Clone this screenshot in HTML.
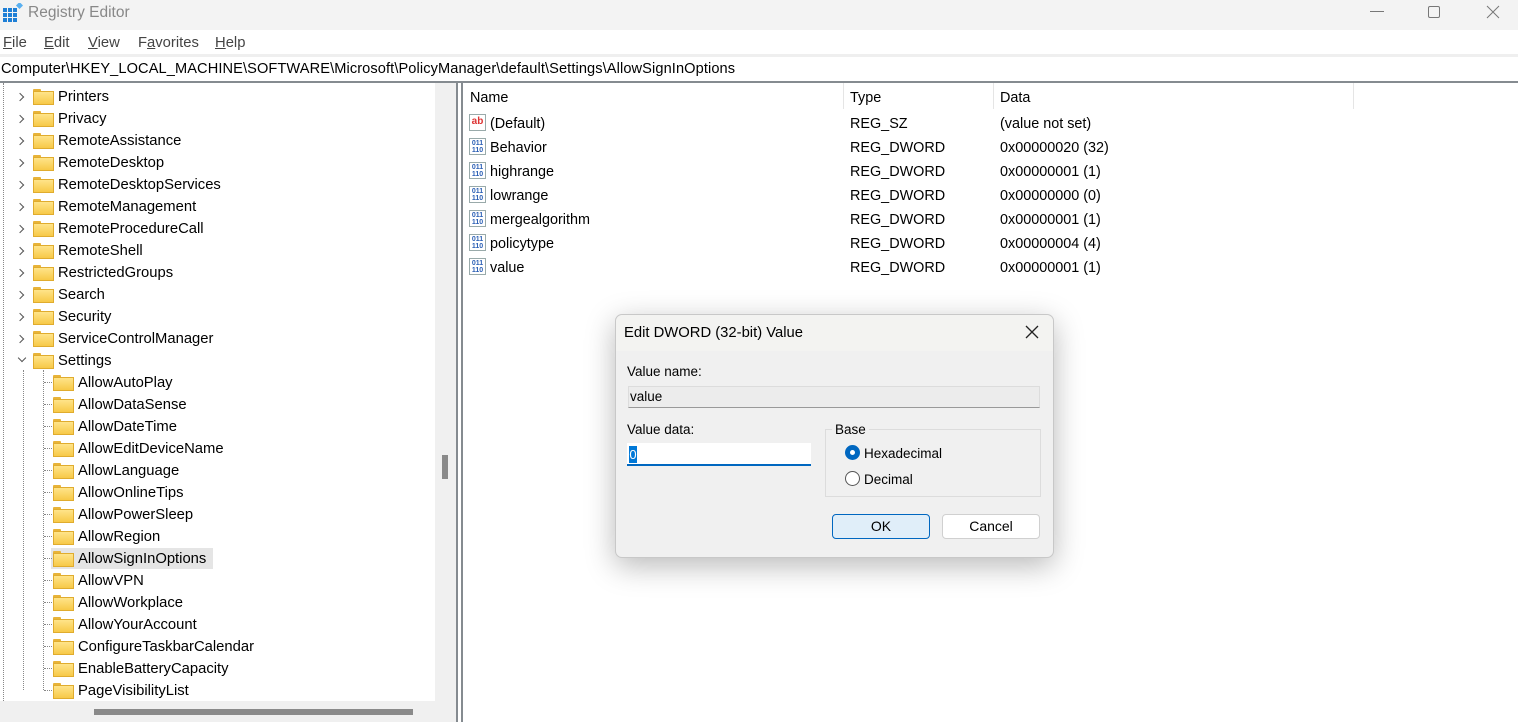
<!DOCTYPE html>
<html><head><meta charset="utf-8"><style>
*{margin:0;padding:0;box-sizing:border-box}
body{width:1518px;height:722px;overflow:hidden;background:#fff;font-family:"Liberation Sans",sans-serif;font-size:14.8px;color:#000;position:relative}
.a{position:absolute;white-space:nowrap}
.fold{position:absolute;width:19px;height:14px}
.fold:before{content:"";position:absolute;left:0;top:0;width:8px;height:4px;background:#e8b339;border-radius:1px 1px 0 0}
.fold:after{content:"";position:absolute;left:0;top:2px;width:19px;height:12px;background:linear-gradient(#ffe48a,#f7c948);border:1px solid #e0ac2e}
.row{position:absolute;height:22px;line-height:22px;white-space:nowrap}
.lr{font-size:14.4px}
.chev{position:absolute;width:6px;height:6px;border-right:1.2px solid #555;border-bottom:1.2px solid #555}
.ic{position:absolute;width:17px;height:17px;border:1px solid #9aa;background:#fff;font-size:7px;line-height:7px;font-weight:bold;color:#2b5fb5;text-align:center;padding-top:1px}
.btn{position:absolute;height:25px;border:1px solid #d0d0d0;border-radius:4px;background:#fff;text-align:center;line-height:23px;font-size:14px}
.m{position:absolute;top:35px;color:#444}
.d{font-size:13.5px}
</style></head><body>
<div class="a" style="left:0;top:0;width:1518px;height:30px;background:#f3f3f3"></div>
<svg class="a" style="left:3px;top:3px" width="20" height="20" viewBox="0 0 20 20"><g fill="#1e7fd6"><rect x="0" y="5" width="4" height="4"/><rect x="5" y="5" width="4" height="4"/><rect x="10" y="5" width="4" height="4"/><rect x="0" y="10" width="4" height="4"/><rect x="5" y="10" width="4" height="4"/><rect x="10" y="10" width="4" height="4"/><rect x="0" y="15" width="4" height="4"/><rect x="5" y="15" width="4" height="4"/><rect x="10" y="15" width="4" height="4"/></g><rect x="14" y="0" width="5" height="5" fill="#5ab0f0" transform="rotate(45 16.5 2.5)"/></svg>
<div class="a" style="left:28px;top:4px;font-size:15.5px;color:#888">Registry Editor</div>
<div class="a" style="left:1370px;top:11px;width:14px;height:1px;background:#777"></div>
<div class="a" style="left:1428px;top:6px;width:12px;height:12px;border:1px solid #777;border-radius:2px"></div>
<svg class="a" style="left:1486px;top:5px" width="14" height="14"><path d="M1 1L13 13M13 1L1 13" stroke="#777" stroke-width="1"/></svg>
<div class="m" style="left:3px"><u>F</u>ile</div>
<div class="m" style="left:44px"><u>E</u>dit</div>
<div class="m" style="left:88px"><u>V</u>iew</div>
<div class="m" style="left:138px">F<u>a</u>vorites</div>
<div class="m" style="left:215px"><u>H</u>elp</div>
<div class="a" style="left:0;top:54px;width:1518px;height:3px;background:#efefef"></div>
<div class="a" style="left:1px;top:61px;font-size:14.6px;letter-spacing:0.1px">Computer\HKEY_LOCAL_MACHINE\SOFTWARE\Microsoft\PolicyManager\default\Settings\AllowSignInOptions</div>
<div class="a" style="left:0;top:81px;width:1518px;height:2px;background:#858b90"></div>
<div class="a" style="left:435px;top:83px;width:21px;height:639px;background:#f0f0f0"></div>
<div class="a" style="left:0;top:701px;width:456px;height:21px;background:#f0f0f0"></div>
<div class="a" style="left:442px;top:455px;width:6px;height:24px;background:#8a8a8a"></div>
<div class="a" style="left:94px;top:709px;width:319px;height:6px;background:#8a8a8a"></div>
<div class="a" style="left:456px;top:83px;width:2px;height:639px;background:#858b90"></div>
<div class="a" style="left:461px;top:83px;width:2px;height:639px;background:#858b90"></div>
<div class="a" style="left:3px;top:83px;height:618px;border-left:1px dotted #888"></div>
<div class="a" style="left:23px;top:370px;height:320px;border-left:1px dotted #888"></div>
<div class="a" style="left:43px;top:370px;height:320px;border-left:1px dotted #888"></div>
<div id="tree"></div>
<div class="a lr" style="left:470px;top:90px">Name</div>
<div class="a lr" style="left:850px;top:90px">Type</div>
<div class="a lr" style="left:1000px;top:90px">Data</div>
<div class="a" style="left:843px;top:83px;width:1px;height:26px;background:#e5e5e5"></div>
<div class="a" style="left:993px;top:83px;width:1px;height:26px;background:#e5e5e5"></div>
<div class="a" style="left:1353px;top:83px;width:1px;height:26px;background:#e5e5e5"></div>
<div id="list"></div>
<div class="a" style="left:615px;top:314px;width:439px;height:244px;background:#f0f0f0;border:1px solid #c8c8c8;border-radius:7px;box-shadow:0 8px 30px rgba(0,0,0,.28)"></div>
<div class="a" style="left:616px;top:315px;width:437px;height:36px;background:#f3f3f1;border-radius:7px 7px 0 0"></div>
<div class="a" style="left:624px;top:325px;font-size:14.8px">Edit DWORD (32-bit) Value</div>
<svg class="a" style="left:1025px;top:325px" width="14" height="14"><path d="M1 1L13 13M13 1L1 13" stroke="#222" stroke-width="1.3"/></svg>
<div class="a d" style="left:627px;top:364px">Value name:</div>
<div class="a" style="left:628px;top:386px;width:412px;height:22px;background:#ececec;border:1px solid #dcdcdc;border-bottom:1px solid #999"></div>
<div class="a d" style="left:630px;top:389px">value</div>
<div class="a d" style="left:627px;top:422px">Value data:</div>
<div class="a" style="left:627px;top:443px;width:184px;height:23px;background:#fff;border-bottom:2px solid #0067c0"></div>
<div class="a" style="left:629px;top:446px;width:8px;height:17px;background:#0078d7;color:#fff;font-size:13px;line-height:17px;text-align:center">0</div>
<div class="a" style="left:825px;top:429px;width:216px;height:68px;border:1px solid #dcdcdc"></div>
<div class="a d" style="left:832px;top:422px;background:#f0f0f0;padding:0 3px">Base</div>
<div class="a" style="left:845px;top:445px;width:15px;height:15px;border-radius:50%;background:#0067c0"></div>
<div class="a" style="left:850px;top:450px;width:5px;height:5px;border-radius:50%;background:#fff"></div>
<div class="a d" style="left:864px;top:446px">Hexadecimal</div>
<div class="a" style="left:845px;top:471px;width:15px;height:15px;border-radius:50%;border:1px solid #555;background:#fff"></div>
<div class="a d" style="left:864px;top:472px">Decimal</div>
<div class="btn" style="left:832px;top:514px;width:98px;background:#e0eef9;border-color:#0067c0">OK</div>
<div class="btn" style="left:942px;top:514px;width:98px">Cancel</div>
<script>
(function(){
var tops=["Printers","Privacy","RemoteAssistance","RemoteDesktop","RemoteDesktopServices","RemoteManagement","RemoteProcedureCall","RemoteShell","RestrictedGroups","Search","Security","ServiceControlManager","Settings"];
var ch=["AllowAutoPlay","AllowDataSense","AllowDateTime","AllowEditDeviceName","AllowLanguage","AllowOnlineTips","AllowPowerSleep","AllowRegion","AllowSignInOptions","AllowVPN","AllowWorkplace","AllowYourAccount","ConfigureTaskbarCalendar","EnableBatteryCapacity","PageVisibilityList"];
var h="";
tops.forEach(function(n,i){var y=86+22*i;
 if(n=="Settings")h+='<div class="chev" style="left:19px;top:'+(y+5)+'px;transform:rotate(45deg)"></div>';
 else h+='<div class="chev" style="left:17px;top:'+(y+8)+'px;transform:rotate(-45deg)"></div>';
 h+='<div class="fold" style="left:33px;top:'+(y+3)+'px"></div><div class="row" style="left:58px;top:'+y+'px">'+n+'</div>';});
ch.forEach(function(n,i){var y=86+22*(13+i);
 if(n=="AllowSignInOptions")h+='<div class="a" style="left:51px;top:'+y+'px;width:162px;height:21px;background:#e5e5e5"></div>';
 h+='<div class="a" style="left:44px;top:'+(y+10)+'px;width:8px;border-top:1px dotted #888"></div>';
 h+='<div class="fold" style="left:53px;top:'+(y+3)+'px"></div><div class="row" style="left:78px;top:'+y+'px">'+n+'</div>';});
document.getElementById("tree").innerHTML=h;
var L=[["(Default)","REG_SZ","(value not set)"],["Behavior","REG_DWORD","0x00000020 (32)"],["highrange","REG_DWORD","0x00000001 (1)"],["lowrange","REG_DWORD","0x00000000 (0)"],["mergealgorithm","REG_DWORD","0x00000001 (1)"],["policytype","REG_DWORD","0x00000004 (4)"],["value","REG_DWORD","0x00000001 (1)"]];
h="";L.forEach(function(r,i){var y=113+24*i;
 h+=i==0?'<div class="ic" style="left:469px;top:'+(y+1)+'px;color:#d33;font-size:10px;line-height:12px">ab</div>':'<div class="ic" style="left:469px;top:'+(y+1)+'px">011<br>110</div>';
 h+='<div class="row lr" style="left:490px;top:'+y+'px">'+r[0]+'</div><div class="row lr" style="left:850px;top:'+y+'px">'+r[1]+'</div><div class="row lr" style="left:1000px;top:'+y+'px">'+r[2]+'</div>';});
document.getElementById("list").innerHTML=h;
})();
</script>
</body></html>
